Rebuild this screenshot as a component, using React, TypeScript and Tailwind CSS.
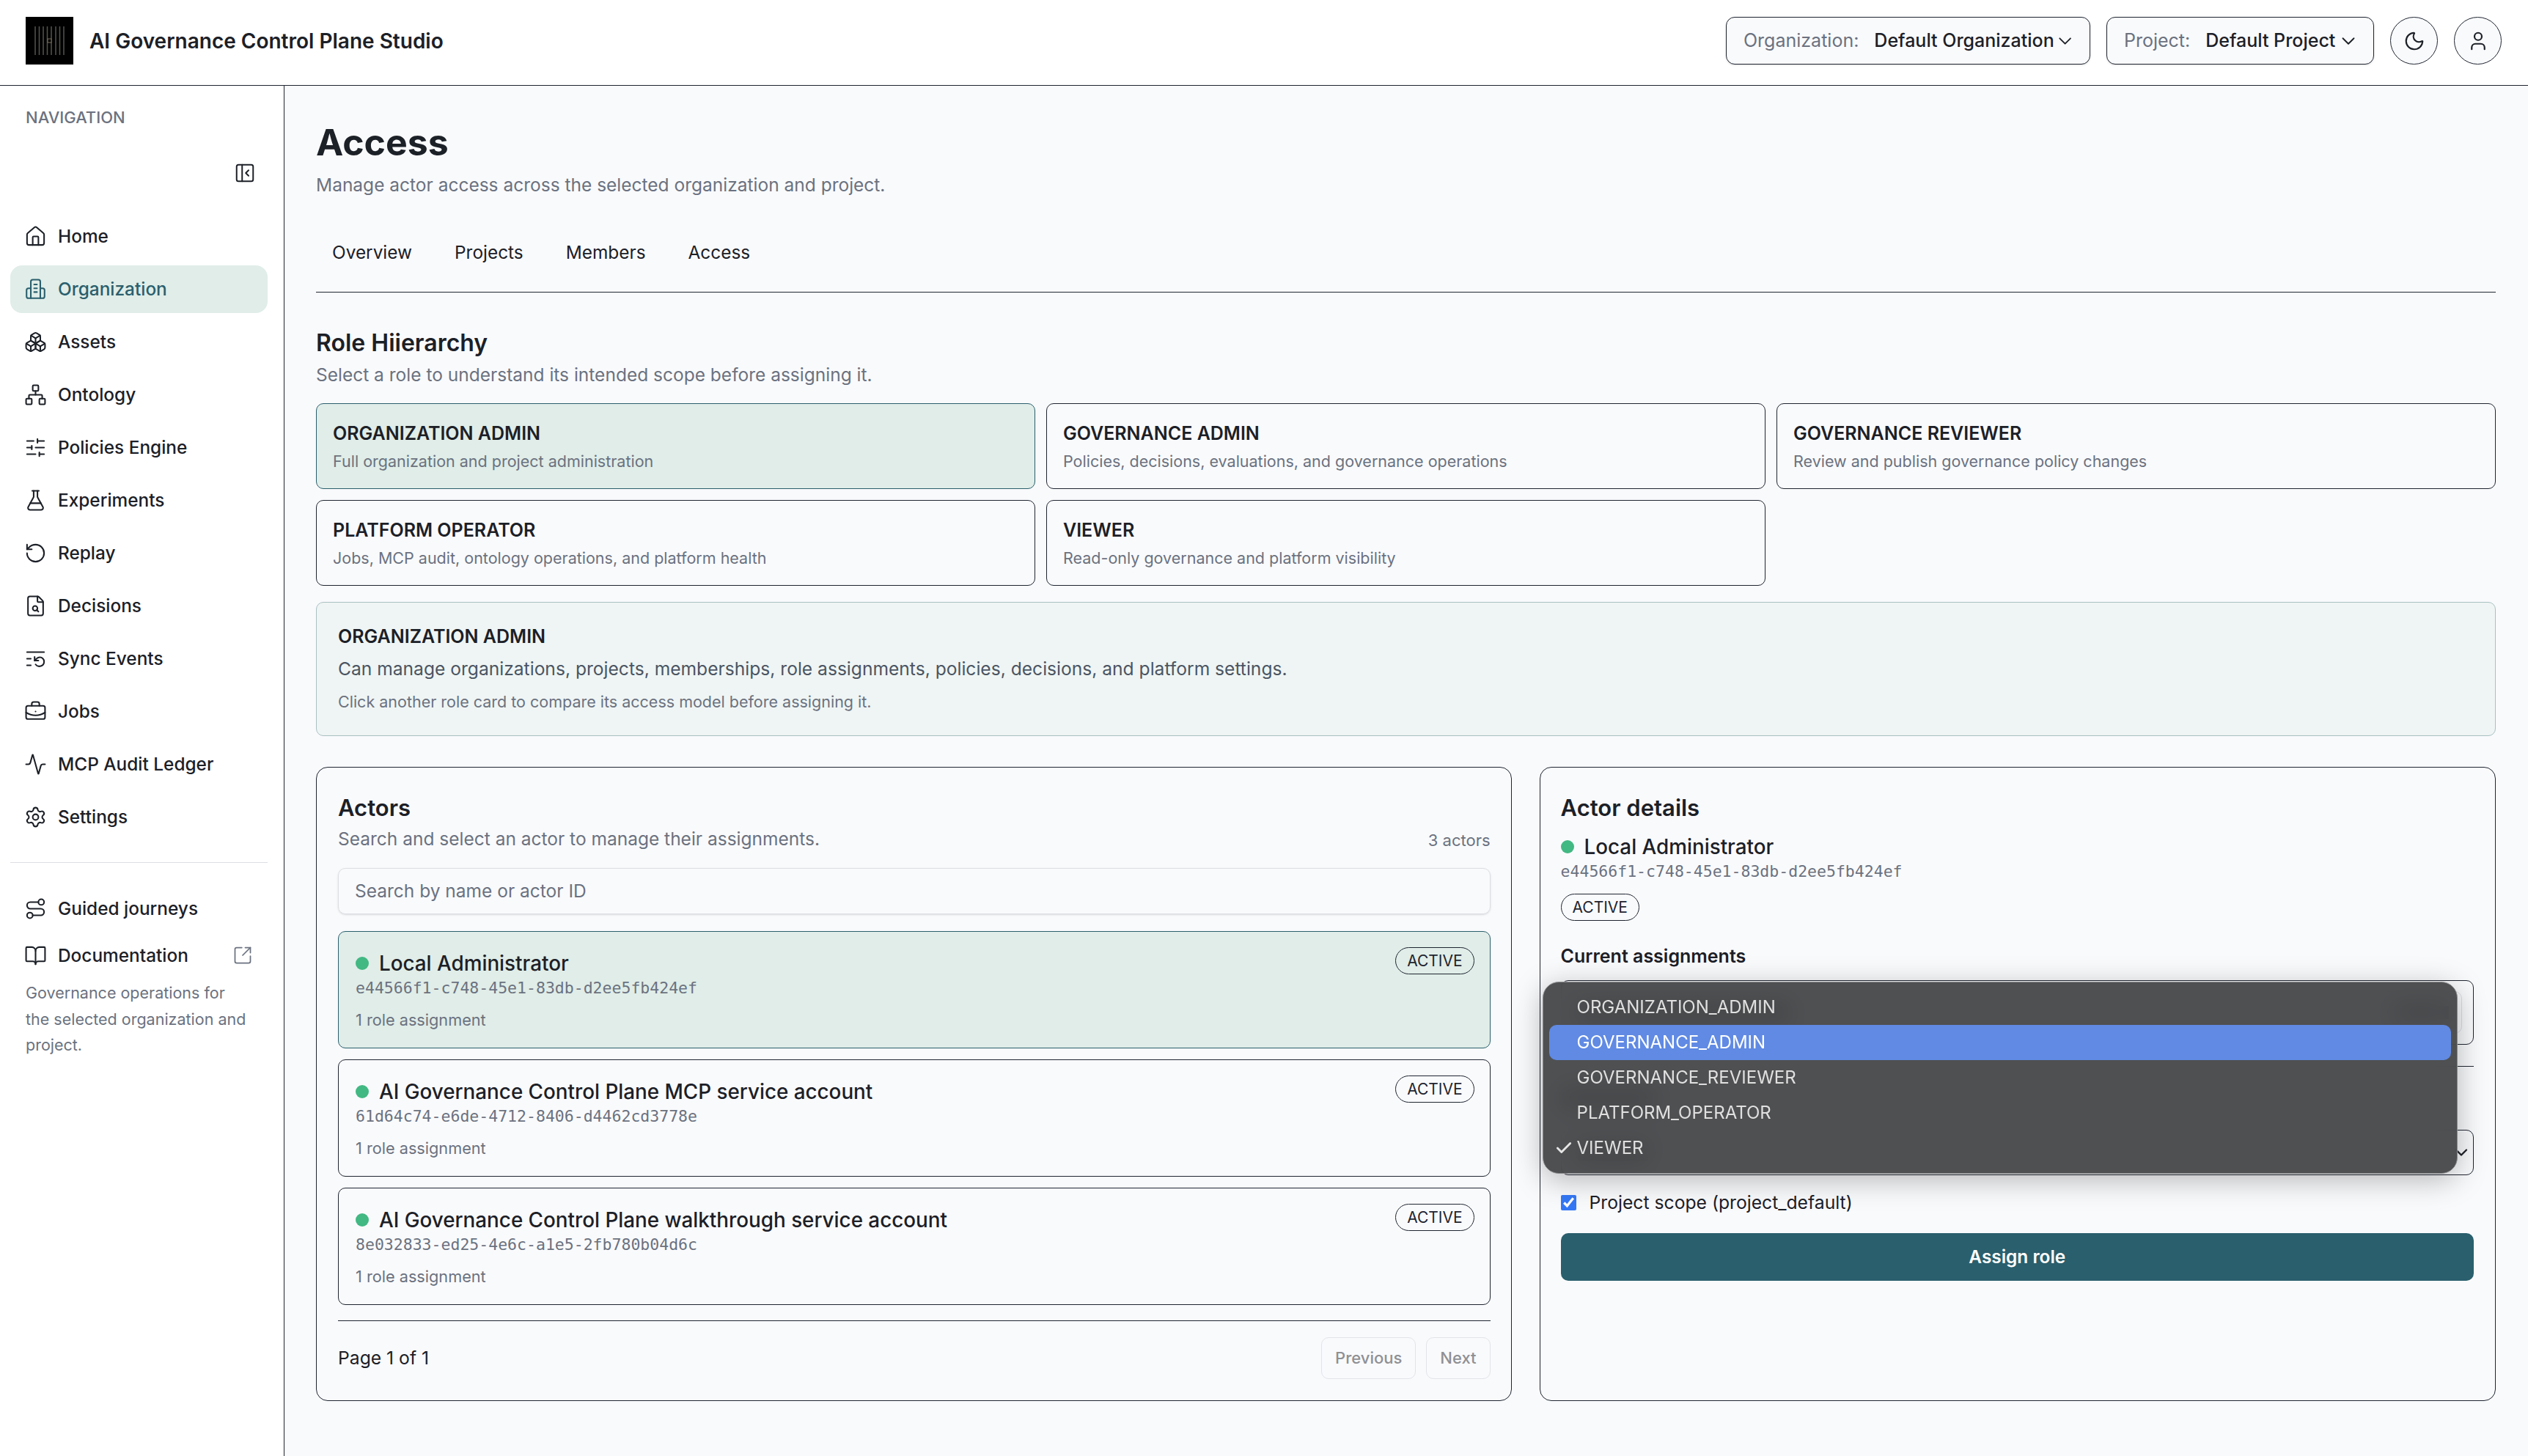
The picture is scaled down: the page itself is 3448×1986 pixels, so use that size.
import { Activity, BookOpen, Boxes, BriefcaseBusiness, Check, ChevronDown, FileSearch, FlaskConical, House, ListRestart, Moon, Network, PanelLeftClose, RotateCcw, Route, Settings, SlidersHorizontal, SquareArrowOutUpRight, User } from 'lucide-react'

function OrgIcon({ size, strokeWidth }: { size: number; strokeWidth: number }) {
  return (
    <svg width={size} height={size} viewBox="0 0 24 24" fill="none" stroke="currentColor" strokeWidth={strokeWidth} strokeLinecap="round" strokeLinejoin="round">
      <path d="M7 21.5V4a2 2 0 0 1 2-2h6a2 2 0 0 1 2 2v17.5" />
      <path d="M7 11H4.500a2 2 0 0 0-2 2v6.500a2 2 0 0 0 2 2h15a2 2 0 0 0 2-2V13a2 2 0 0 0-2-2H17" />
      <path d="M10.500 7h3M10.500 11h3M10.500 15h3" />
    </svg>
  )
}

const navItems = [
  { label: 'Home', icon: House },
  { label: 'Organization', icon: OrgIcon, active: true },
  { label: 'Assets', icon: Boxes },
  { label: 'Ontology', icon: Network },
  { label: 'Policies Engine', icon: SlidersHorizontal },
  { label: 'Experiments', icon: FlaskConical },
  { label: 'Replay', icon: RotateCcw },
  { label: 'Decisions', icon: FileSearch },
  { label: 'Sync Events', icon: ListRestart },
  { label: 'Jobs', icon: BriefcaseBusiness },
  { label: 'MCP Audit Ledger', icon: Activity },
  { label: 'Settings', icon: Settings },
]

const roles = [
  { name: 'ORGANIZATION ADMIN', text: 'Full organization and project administration', active: true },
  { name: 'GOVERNANCE ADMIN', text: 'Policies, decisions, evaluations, and governance operations' },
  { name: 'GOVERNANCE REVIEWER', text: 'Review and publish governance policy changes' },
  { name: 'PLATFORM OPERATOR', text: 'Jobs, MCP audit, ontology operations, and platform health' },
  { name: 'VIEWER', text: 'Read-only governance and platform visibility' },
]

const actors = [
  { name: 'Local Administrator', id: 'e44566f1-c748-45e1-83db-d2ee5fb424ef', active: true },
  { name: 'AI Governance Control Plane MCP service account', id: '61d64c74-e6de-4712-8406-d4462cd3778e' },
  { name: 'AI Governance Control Plane walkthrough service account', id: '8e032833-ed25-4e6c-a1e5-2fb780b04d6c' },
]

const menuOptions = ['ORGANIZATION_ADMIN', 'GOVERNANCE_ADMIN', 'GOVERNANCE_REVIEWER', 'PLATFORM_OPERATOR', 'VIEWER']

function Logo() {
  return (
    <svg width="65" height="65" viewBox="0 0 65 65" className="shrink-0">
      <rect width="65" height="65" fill="#000" />
      {[13, 18.5, 24, 29.5, 35, 41, 46.5, 52].map(x => (
        <line key={x} x1={x} x2={x} y1="13" y2="52" stroke="#55554f" strokeWidth="1.5" />
      ))}
      <rect x="30" y="30" width="5" height="5" fill="#000" stroke="#7d7360" strokeWidth="1" />
    </svg>
  )
}

function ActiveBadge() {
  return (
    <span className="h-[37px] px-[15px] flex items-center rounded-full border border-[#1f2530] text-[21px] text-[#1f2530]">ACTIVE</span>
  )
}

export default function App() {
  return (
    <div className="h-[1986px] w-[3448px] overflow-hidden flex flex-col bg-[#f9fafc] text-[#1c2027] font-['Inter','Noto_Sans',sans-serif]">
      <header className="h-[117px] shrink-0 bg-white border-b border-[#1f2530] flex items-center pl-[35px] pr-[36px] pb-[5px]">
        <Logo />
        <span className="ml-[22px] text-[28px] font-semibold">AI Governance Control Plane Studio</span>
        <div className="ml-auto flex items-center gap-[22px]">
          <div className="h-[65px] w-[497px] rounded-[12px] border border-[#1f2530] bg-[#f9fafc] shadow-sm flex items-center pl-[23px] pr-[19px] text-[25px] whitespace-nowrap">
            <span className="text-[#6b7280]">Organization:</span>
            <span className="ml-[21px] font-medium">Default Organization</span>
            <ChevronDown size={30} strokeWidth={1.5} className="ml-auto" />
          </div>
          <div className="h-[65px] w-[365px] rounded-[12px] border border-[#1f2530] bg-[#f9fafc] shadow-sm flex items-center pl-[23px] pr-[19px] text-[25px] whitespace-nowrap">
            <span className="text-[#6b7280]">Project:</span>
            <span className="ml-[21px] font-medium">Default Project</span>
            <ChevronDown size={30} strokeWidth={1.5} className="ml-auto" />
          </div>
          <div className="flex gap-[22px]">
            <button className="size-[65px] rounded-full border border-[#1f2530] bg-[#f9fafc] flex items-center justify-center"><Moon size={30} strokeWidth={1.75} /></button>
            <button className="size-[65px] rounded-full border border-[#1f2530] bg-[#f9fafc] flex items-center justify-center"><User size={30} strokeWidth={1.75} /></button>
          </div>
        </div>
      </header>

      <div className="flex-1 flex min-h-0">
        <aside className="w-[388px] shrink-0 bg-white border-r border-[#1f2530] pl-[14px] pr-[22px]">
          <div className="pt-[28px] pl-[21px] text-[22px] font-medium leading-[30px] text-[#6b7280]">NAVIGATION</div>
          <div className="flex justify-end pr-[16px] mt-[46px] mb-[39px]">
            <PanelLeftClose size={30} strokeWidth={1.6} />
          </div>
          <nav className="flex flex-col gap-[7px]">
            {navItems.map(item => (
              <div key={item.label} className={`h-[65px] rounded-[16px] flex items-center gap-[15px] pl-[19px] text-[24.4px] font-medium ${item.active ? 'bg-[#e0ede8] text-[#2a5f6d]' : ''}`}>
                <item.icon size={31} strokeWidth={1.6} />
                {item.label}
              </div>
            ))}
          </nav>
          <div className="h-[1px] bg-[#dcdee3] mt-[29px] mb-[30px]" />
          <div className="h-[64px] flex items-center gap-[15px] pl-[19px] text-[24.4px] font-medium">
            <Route size={31} strokeWidth={1.6} />
            Guided journeys
          </div>
          <div className="h-[64px] flex items-center gap-[15px] pl-[19px] pr-[20px] text-[24.4px] font-medium">
            <BookOpen size={31} strokeWidth={1.6} />
            Documentation
            <SquareArrowOutUpRight size={28} strokeWidth={1.5} className="ml-auto text-[#6b7280]" />
          </div>
          <p className="ml-[21px] w-[308px] mt-[2px] text-[21.5px] leading-[35.5px] text-[#6b7280]">Governance operations for the selected organization and project.</p>
        </aside>

        <main className="flex-1 min-w-0 pl-[43px] pr-[44px] pt-[41px]">
          <h1 className="text-[50px] font-bold leading-[72px]">Access</h1>
          <p className="mt-[4px] text-[24.5px] leading-[36px] text-[#6b7280]">Manage actor access across the selected organization and project.</p>

          <div className="mt-[36px] h-[93px] flex items-start gap-[14px] border-b border-[#1f2530] pt-[14px]">
            {['Overview', 'Projects', 'Members', 'Access'].map(tab => (
              <span key={tab} className="px-[22px] leading-[48px] text-[24.4px]">{tab}</span>
            ))}
          </div>

          <h2 className="mt-[46px] text-[32px] font-semibold leading-[46px]">Role Hiierarchy</h2>
          <p className="mt-[1px] text-[24.5px] leading-[38px] text-[#6b7280]">Select a role to understand its intended scope before assigning it.</p>

          <div className="mt-[20px] grid grid-cols-3 gap-x-[15px] gap-y-[15px]">
            {roles.map(r => (
              <div key={r.name} className={`h-[117px] rounded-[10px] border px-[22px] pt-[22px] ${r.active ? 'bg-[#e0ede8] border-[#2a5f6d]' : 'border-[#1f2530]'}`}>
                <div className="text-[25px] font-semibold leading-[36px]">{r.name}</div>
                <div className="mt-[5px] text-[21.5px] leading-[30px] text-[#6b7280]">{r.text}</div>
              </div>
            ))}
          </div>

          <div className="mt-[22px] h-[183px] rounded-[10px] border border-[#a9c0c2] bg-[#eff5f4] px-[29px] pt-[29px]">
            <div className="text-[25px] font-semibold leading-[34px]">ORGANIZATION ADMIN</div>
            <div className="mt-[9px] text-[24.6px] leading-[36px] text-[#4b5563]">Can manage organizations, projects, memberships, role assignments, policies, decisions, and platform settings.</div>
            <div className="mt-[12px] text-[21.5px] leading-[30px] text-[#6b7280]">Click another role card to compare its access model before assigning it.</div>
          </div>

          <div className="mt-[42px] h-[865px] grid grid-cols-[5fr_4fr] gap-[38px]">
            <section className="rounded-[16px] border border-[#1f2530] pl-[29px] pr-[28px] pt-[33px]">
              <h3 className="text-[31px] font-semibold leading-[44px]">Actors</h3>
              <div className="mt-[2px] flex items-end justify-between">
                <span className="text-[24.5px] leading-[36px] text-[#6b7280]">Search and select an actor to manage their assignments.</span>
                <span className="text-[22px] leading-[32px] text-[#6b7280]">3 actors</span>
              </div>
              <div className="mt-[22px] h-[63px] rounded-[10px] border border-[#dcdee3] shadow-sm flex items-center pl-[22px] text-[24.5px] text-[#6b7280]">Search by name or actor ID</div>
              <div className="mt-[23px] flex flex-col gap-[15px]">
                {actors.map(a => (
                  <div key={a.id} className={`relative h-[160px] rounded-[10px] border pl-[23px] pt-[23px] ${a.active ? 'bg-[#e0ede8] border-[#2a5f6d]' : 'border-[#1f2530]'}`}>
                    <div className="flex items-center gap-[14px]">
                      <span className="size-[18px] rounded-full bg-[#42b883]" />
                      <span className="text-[27.8px] font-medium leading-[40px]">{a.name}</span>
                    </div>
                    <div className="mt-[-1px] font-['DejaVu_Sans_Mono',monospace] text-[21.5px] leading-[30px] text-[#6b7280]">{a.id}</div>
                    <div className="mt-[13px] text-[21.7px] leading-[30px] text-[#6b7280]">1 role assignment</div>
                    <div className="absolute right-[21px] top-[21px]"><ActiveBadge /></div>
                  </div>
                ))}
              </div>
              <div className="mt-[21px] border-t border-[#1f2530] pt-[22px] flex items-center justify-between">
                <span className="text-[24.7px]">Page 1 of 1</span>
                <div className="flex gap-[14px]">
                  {['Previous', 'Next'].map(label => (
                    <button key={label} className="h-[57px] px-[18px] rounded-[10px] border border-[#e3e4e8] text-[22px] font-medium text-[#8f9094]">{label}</button>
                  ))}
                </div>
              </div>
            </section>

            <section className="relative rounded-[16px] border border-[#1f2530] pl-[28px] pr-[29px] pt-[33px]">
              <h3 className="text-[31px] font-semibold leading-[44px]">Actor details</h3>
              <div className="mt-[11px] flex items-center gap-[14px]">
                <span className="size-[18px] rounded-full bg-[#42b883]" />
                <span className="text-[27.8px] font-medium leading-[40px]">Local Administrator</span>
              </div>
              <div className="mt-[-1px] font-['DejaVu_Sans_Mono',monospace] text-[21.5px] leading-[30px] text-[#6b7280]">e44566f1-c748-45e1-83db-d2ee5fb424ef</div>
              <div className="mt-[15px] flex"><ActiveBadge /></div>
              <div className="mt-[30px] text-[25px] font-semibold leading-[36px]">Current assignments</div>

              {/* these sit under the popup: only a blurred smudge of their content shows in the picture */}
              <div className="mt-[15px] h-[88px] rounded-[10px] border border-[#1f2530] flex items-center justify-between pl-[22px] pr-[15px]">
                <span className="h-[24px] w-[290px] bg-[#1c2027]" />
                <span className="h-[58px] w-[112px] flex items-center justify-center rounded-[10px] border border-[#dcdee3]">
                  <span className="h-[18px] w-[76px] bg-[#1c2027]" />
                </span>
              </div>
              <div className="mt-[29px] border-t border-[#1f2530] pt-[25px] h-[62px] flex items-center">
                <span className="h-[22px] w-[130px] bg-[#1c2027]" />
              </div>
              <div className="mt-[25px] h-[62px] rounded-[10px] border border-[#1f2530] flex items-center justify-between pl-[22px] pr-[2px]">
                <span className="h-[22px] w-[96px] bg-[#1c2027]" />
                <ChevronDown size={28} strokeWidth={2} />
              </div>
              <label className="mt-[19px] flex items-center gap-[18px] text-[24.7px] leading-[36px]">
                <input type="checkbox" defaultChecked className="size-[21px] accent-[#3478f6]" />
                Project scope (project_default)
              </label>
              <button className="mt-[24px] w-full h-[65px] rounded-[10px] bg-[#2a5f6d] text-white text-[24.4px] font-semibold">Assign role</button>

              {/* native select popup */}
              <div className="absolute left-[3px] top-[292px] w-[1248px] h-[262px] rounded-[22px] border-[1.5px] border-[#8b8c8e] bg-[#464749]/95 backdrop-blur-lg shadow-[0_8px_40px_rgba(0,0,0,0.28)] px-[8px] pt-[10px]">
                {menuOptions.map((opt, i) => (
                  <div key={opt} className={`relative h-[48px] rounded-[10px] flex items-center pl-[38px] text-[24px] ${i === 1 ? 'bg-[#608ae3] text-white' : 'text-[#e0e0e0]'}`}>
                    {opt === 'VIEWER' && <Check size={26} strokeWidth={2.6} className="absolute left-[7px] text-[#e6e6e6]" />}
                    {opt}
                  </div>
                ))}
              </div>
            </section>
          </div>
        </main>
      </div>
    </div>
  )
}
